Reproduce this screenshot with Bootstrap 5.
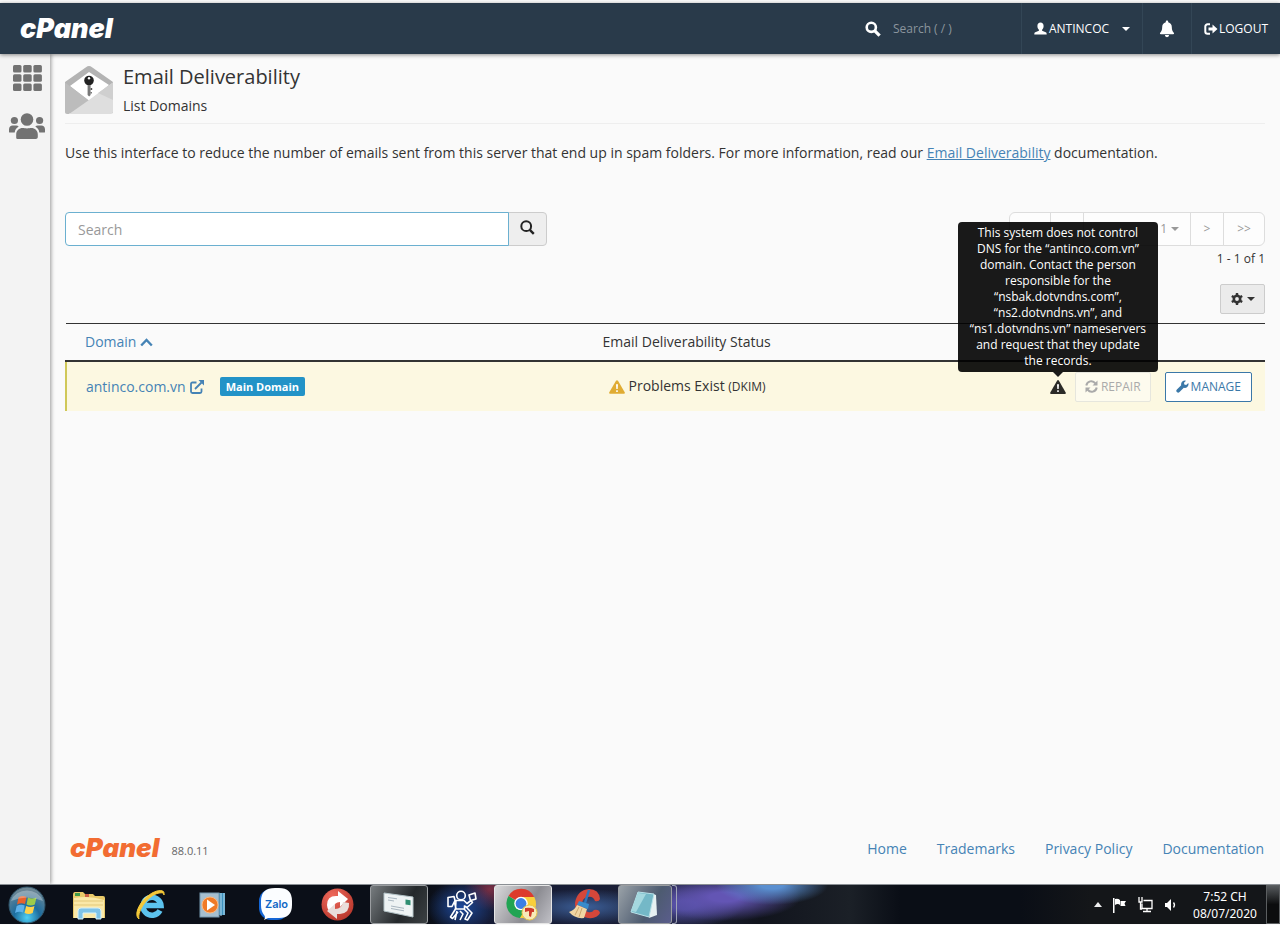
<!DOCTYPE html>
<html lang="en">
<head>
<meta charset="utf-8">
<meta name="viewport" content="width=device-width, initial-scale=1">
<title>cPanel - Email Deliverability</title>
<link href="https://cdn.jsdelivr.net/npm/bootstrap@5.3.0/dist/css/bootstrap.min.css" rel="stylesheet">
<style>
  body { font-family: "Open Sans", "Noto Sans", sans-serif; font-size: 14px; line-height: 20px; color: #333; background: #fafafa; }
  a { color: #4583b5; }
  svg { display: block; flex: none; }
  .topbar { height: 51px; margin-top: 3px; background: #293a4a; box-shadow: 0 1px 4px rgba(0,0,0,.45); z-index: 3; font-size: 12px; }
  .brand { font-family: Inter, "Open Sans", sans-serif; font-weight: 900; font-style: italic; font-size: 27px; line-height: 28px; text-decoration: none; }
  .topbar .brand { color: #fff; padding-left: 20px; }
  .page-foot .brand { color: #f26c32; font-size: 26px; }
  .top-seg { border-left: 1px solid #334656; }
  .top-seg, .top-seg:hover { color: #fff; }
  .top-search input { width: 128px; background: transparent; color: #fff; font-size: 12px; border: 0; outline: 0; padding: 0; }
  .top-search input::placeholder { color: #8b959d; opacity: 1; }
  .seg-user { width: 121px; font-size: 12px; border-radius: 0; padding: 0 12px; border-width: 0 0 0 1px; gap: 2px; }
  .seg-bell { width: 49px; border-width: 0 0 0 1px; border-radius: 0; padding: 0; }
  .seg-out { width: 89px; gap: 1px; }
  .caret-down { width: 0; height: 0; border: 4px solid transparent; border-top-color: currentColor; border-bottom: 0; }
  .side { width: 50px; background: #f3f3f3; box-shadow: 1px 0 4px rgba(0,0,0,.4); padding-top: 11px; gap: 22px; z-index: 2; }
  .content { padding: 10px 15px 0; }
  .page-head { border-bottom: 1px solid #eee; padding: 2px 0 7px; gap: 10px; }
  .page-head h1 { font-size: 20px; line-height: 22px; font-weight: 400; margin: 0 0 8px; }
  .intro { margin: 19px 0 49px; }
  .find { width: 482px; height: 34px; }
  .find .form-control { border: 1px solid #6bb0d0; border-radius: 4px 0 0 4px; font-size: 14px; padding: 6px 12px; box-shadow: none; color: #555; }
  .find .form-control::placeholder { color: #999; }
  .find .btn { width: 39px; background: #eee; border: 1px solid #ccc; padding: 0 0 3px; border-radius: 0 4px 4px 0; z-index: 0; }
  .find .form-control { z-index: 1; }
  .pager .page-link { height: 34px; min-width: 34px; font-size: 12px; line-height: 18px; padding: 7px 11px; text-align: center; color: #999; background: #fdfdfd; border-color: #ddd; }
  .pager .edge { width: 42px; }
  .pager .wide { width: 108px; justify-content: flex-end; }
  .count { font-size: 12px; line-height: 16px; margin: 5px 0 17px; }
  .gear { width: 45px; height: 30px; background: #ebebeb; border: 1px solid #ccc; border-radius: 2px; padding: 0; color: #333; }
  .domains { margin: 9px 0 0; --bs-table-bg: transparent; border-color: #333; color: #333; }
  .domains th { font-weight: 400; padding: 8px 8px 8px 10px; border-top: 1px solid #333; border-bottom: 2px solid #333; line-height: 20px; }
  .domains th a { vertical-align: top; }
  .domains th:first-child { width: 44%; padding-left: 19px; }
  .domains th:nth-child(2) { width: 32%; padding-left: 9px; }
  .domains td { background: #fcf8e1; padding: 9px 13px 9px 15px; border: 0; height: 50px; vertical-align: middle; }
  .domains td:first-child { border-left: 2px solid #d0c858; padding-left: 19px; }
  .domains td a, .domains th a { text-decoration: none; }
  .sub { font-size: 12px; }
  .tag { background: #2293c7; font-size: 11px; line-height: 13px; font-weight: 700; padding: 3px 6px; border-radius: 2px; margin-left: 16px; }
  .act { height: 30px; font-size: 12px; line-height: 18px; padding: 0 10px; border-radius: 2px; gap: 2px; }
  .act-repair, .act-repair:disabled { color: #aaa; border-color: #e6e6dd; background: #fdfbee; opacity: 1; padding: 0 9px; gap: 3px; }
  .act-manage { color: #3b78a8; border-color: #3b78a8; background: #fff; margin-left: 14px; }
  .alert-mark { margin-right: 9px; }
  .tip { position: absolute; bottom: 100%; left: 50%; width: 200px; margin: 0 0 7px -100px; z-index: 5; }
  .tip .tooltip-inner { max-width: none; background: rgba(0,0,0,.9); border-radius: 4px; font-size: 12px; line-height: 16px; padding: 3px 8px; color: #fff; }
  .tip .tip-arrow { width: 0; height: 0; border: 5px solid transparent; border-top-color: #1a1a1a; border-bottom: 0; position: absolute; top: 100%; left: 50%; margin-left: -5px; }
  .page-foot { padding: 0 1px 20px 5px; }
  .page-foot small { font-size: 11px; color: #666; }
  .page-foot .brand { padding-bottom: 2px; }
  .foot-links { gap: 30px; }
  .foot-links a { text-decoration: none; }
  .taskbar { height: 40px; margin-bottom: 1px; border-top: 1px solid #8a8f94; gap: 4px; color: #fff; z-index: 4;
    background:
      radial-gradient(ellipse 34px 26px at 461px 22px, #1e4a9c, transparent),
      radial-gradient(ellipse 26px 22px at 490px 4px, #7a2f45, transparent),
      radial-gradient(ellipse 72px 18px at 585px 22px, #3c5f98, transparent),
      radial-gradient(ellipse 56px 20px at 772px 0, #5a8fd0 20%, transparent),
      radial-gradient(ellipse 76px 24px at 725px 12px, #6355b4 20%, transparent),
      radial-gradient(ellipse 60px 22px at 685px 20px, #4f4c9c 20%, transparent),
      linear-gradient(90deg, #0b0f18 0, #0b0f18 430px, #151b35 480px, #1c2036 680px, #11141d 760px, #1b2027 850px, #0a0e16 900px, #0a0e16 1020px, #141619 1090px); }
  .task { width: 58px; height: 39px; padding: 0; border: 0; background: transparent; display: flex; align-items: center; justify-content: center; }
  .task-open { border: 1px solid #9a9da0; border-radius: 3px; background: linear-gradient(120deg, #777c7f, #24282b 60%, #3b4043); }
  .task-now { border: 1px solid #e5e5e5; background: linear-gradient(120deg, #d9d9db, #8c8c92 60%, #c0c0c6); }
  .task-pad { width: 54px; background: linear-gradient(120deg, #9aa2a8, #4d5b70 60%, #5a5d8c); }
  .task-stack { width: 5px; height: 39px; margin-left: -4px; border: 1px solid #a0a4b8; border-left: 0; border-radius: 0 3px 3px 0; }
  .task-start { width: 56px; padding-right: 2px; }
  .tray { gap: 10px; }
  .clock { font-size: 12px; line-height: 17px; width: 66px; text-align: center; margin: 0 4px 0 5px; font-family: "Noto Sans", "Open Sans", sans-serif; }
  .clock div { white-space: nowrap; }
  .peek { width: 14px; height: 39px; border: 1px solid #5b5e60; background: linear-gradient(#55595c, #0c0d0e 50%); padding: 0; }
</style>
</head>
<body class="d-flex flex-column min-vh-100">

<header class="topbar d-flex align-items-stretch position-relative">
  <a class="brand d-flex align-items-center" href="#">cPanel</a>
  <form class="top-search d-flex align-items-center ms-auto">
    <label for="quick" class="me-2 pe-1" aria-label="Search">
      <svg width="16" height="16" viewBox="0 0 16 16" fill="none" stroke="#fff" stroke-width="2.6"><circle cx="6.3" cy="6.3" r="4.6"/><path d="M9.8 9.8 14.6 14.6" stroke-width="3.2"/></svg>
    </label>
    <input id="quick" type="text" placeholder="Search ( / )">
  </form>
  <button class="btn top-seg seg-user d-flex align-items-center" type="button">
    <svg width="13" height="13" viewBox="0 0 13 13" fill="#fff"><path d="M6.500.5C8.400.5 9.600 1.800 9.600 4c0 1.600-.7 3-1.500 3.800v1l3.600 1.500c.8.4 1 1 1 2.200H.3c0-1.200.2-1.800 1-2.200l3.600-1.500v-1C4.100 7 3.400 5.600 3.400 4 3.400 1.800 4.600.5 6.500.5z"/></svg>
    <span class="text-nowrap">ANTINCOC</span><span class="caret-down ms-auto"></span>
  </button>
  <button class="btn top-seg seg-bell d-flex align-items-center justify-content-center" type="button" aria-label="Notifications">
    <svg width="16" height="18" viewBox="0 0 16 18" fill="#fff"><path d="M8 .5c.7 0 1.200.5 1.200 1.200v.5c2.300.6 3.600 2.400 3.600 4.800 0 3 .8 4.600 2 5.700.5.5.3 1.500-.6 1.500H1.800c-.9 0-1.100-1-.6-1.500 1.200-1.100 2-2.700 2-5.700 0-2.400 1.300-4.200 3.600-4.800v-.5C6.800 1 7.300.5 8 .5zM5.900 15.100h4.200a2.100 2.100 0 0 1-4.200 0z"/></svg>
  </button>
  <a class="top-seg seg-out d-flex align-items-center justify-content-center text-decoration-none" href="#">
    <svg width="14" height="12" viewBox="0 0 14 12"><path d="M6 1.300H3.500A2.200 2.200 0 0 0 1.300 3.500v5a2.200 2.200 0 0 0 2.200 2.200H6" fill="none" stroke="#fff" stroke-width="2"/><path d="M4.500 4.400h4V1.500L13.500 6l-5 4.500V7.600h-4z" fill="#fff"/></svg>
    <span>LOGOUT</span>
  </a>
</header>

<div class="d-flex flex-grow-1">
  <nav class="side d-flex flex-column align-items-center flex-shrink-0 position-relative" aria-label="Main">
    <a href="#" aria-label="Home" class="ms-1">
      <svg width="29" height="26" viewBox="0 0 29 26" fill="#727272"><g id="r"><rect x="0" y="0" width="8.500" height="7.500" rx="1.500"/><rect x="10.200" y="0" width="8.500" height="7.500" rx="1.500"/><rect x="20.400" y="0" width="8.500" height="7.500" rx="1.500"/></g><use href="#r" y="9.200"/><use href="#r" y="18.400"/></svg>
    </a>
    <a href="#" aria-label="User manager" class="ms-1">
      <svg width="36" height="26" viewBox="0 0 36 26" fill="#727272"><circle cx="18" cy="6.500" r="6.300"/><circle cx="5.400" cy="7.500" r="3.600"/><circle cx="30.600" cy="7.500" r="3.600"/><path d="M7.200 25v-3.500c0-4 3-6.500 6.500-6.500 1.500 0 2.300.4 4.300.4s2.800-.4 4.300-.4c3.500 0 6.500 2.500 6.500 6.500v2.500c0 1.200-.9 2-2 2H9.200c-1.100 0-2-.4-2-1z"/><path d="M0 19v-2.500c0-2.500 1.600-4 3.600-4h3.600c1 0 1.900.4 2.500 1.100C7.400 15 6 16.800 5.700 19.600H1.200C.5 19.600 0 19.300 0 19zM36 19v-2.500c0-2.500-1.600-4-3.600-4h-3.600c-1 0-1.900.4-2.500 1.100 2.300 1.400 3.700 3.200 4 6h4.500c.7 0 1.200-.3 1.200-.6z"/></svg>
    </a>
  </nav>

  <main class="content flex-grow-1 d-flex flex-column">
    <div class="page-head d-flex">
      <svg width="48" height="48" viewBox="0 0 48 48"><path d="M0 16 21 1.200q3-2.200 6 0L48 16v31H2q-2 0-2-2z" fill="#b3b3b3"/><path d="M5 20 24 6l20 13-20 16z" fill="#fff"/><path d="M0 16.500 24 34.500 4 48H2q-2 0-2-2z" fill="#bcbcbc"/><path d="M48 16.500V46q0 2-2 2H4l20-14z" fill="#dedede"/><path d="M48 16.500V34L33 27z" fill="#cfcfcf"/><circle cx="24" cy="14.500" r="4.800" fill="#222"/><circle cx="24" cy="12.300" r="1.200" fill="#fff"/><path d="M22.600 19h3v10l-1.500 1.500-1.500-1.500z" fill="#777"/><path d="M25.600 22h1.600v2h-1.600zM25.600 26h1.200v1.500h-1.200z" fill="#555"/></svg>
      <div>
        <h1>Email Deliverability</h1>
        <div>List Domains</div>
      </div>
    </div>

    <p class="intro">Use this interface to reduce the number of emails sent from this server that end up in spam folders. For more information, read our <a href="#">Email Deliverability</a> documentation.</p>

    <div class="d-flex justify-content-between align-items-start">
      <div class="input-group find flex-nowrap">
        <input type="text" class="form-control" placeholder="Search" aria-label="Search">
        <button class="btn d-flex align-items-center justify-content-center" type="button" aria-label="Go">
          <svg width="15" height="15" viewBox="0 0 15 15" fill="none" stroke="#222" stroke-width="2"><circle cx="6.200" cy="6.200" r="4.900"/><path d="M9.800 9.800 13.800 13.800" stroke-width="2.400"/></svg>
        </button>
      </div>
      <div class="d-flex flex-column align-items-end">
        <ul class="pagination pager m-0">
          <li class="page-item"><a class="page-link edge" href="#" aria-label="First page"></a></li>
          <li class="page-item"><a class="page-link" href="#" aria-label="Previous page"></a></li>
          <li class="page-item"><a class="page-link wide d-flex align-items-center text-nowrap" href="#">1<span class="caret-down ms-1"></span></a></li>
          <li class="page-item"><a class="page-link" href="#">&gt;</a></li>
          <li class="page-item"><a class="page-link edge" href="#">&gt;&gt;</a></li>
        </ul>
        <div class="count">1 - 1 of 1</div>
        <button class="btn gear d-flex align-items-center justify-content-center" type="button" aria-label="Settings">
          <svg width="12" height="12" viewBox="0 0 12 12"><circle cx="6" cy="6" r="3.200" fill="none" stroke="#333" stroke-width="2.600"/><path d="M6 0v2.500M6 9.500V12M.8 3l2.200 1.300M9 7.700 11.200 9M.8 9 3 7.700M9 4.300 11.200 3" stroke="#333" stroke-width="2.400"/></svg>
          <span class="caret-down ms-1"></span>
        </button>
      </div>
    </div>

    <table class="table domains">
      <thead>
        <tr>
          <th scope="col"><a href="#" class="d-inline-flex align-items-center gap-1">Domain <svg width="13" height="9" viewBox="0 0 13 9" fill="none" stroke="#4583b5" stroke-width="2.400"><path d="M1.200 7.500 6.500 2l5.300 5.500"/></svg></a></th>
          <th scope="col">Email Deliverability Status</th>
          <th scope="col" aria-label="Actions"></th>
        </tr>
      </thead>
      <tbody>
        <tr>
          <td>
            <div class="d-flex align-items-center">
              <a href="#" class="d-flex align-items-center gap-1">antinco.com.vn
                <svg width="14" height="14" viewBox="0 0 14 14" fill="none" stroke="#4583b5" stroke-width="1.800"><path d="M6.500 2.500h-4q-1.500 0-1.500 1.500v7.500q0 1.500 1.500 1.500H10q1.500 0 1.500-1.500v-3M5 9l6.500-6.500"/><path d="M8.500 0H14v5.500z" fill="#4583b5" stroke="none"/></svg>
              </a>
              <span class="badge tag">Main Domain</span>
            </div>
          </td>
          <td>
            <div class="d-flex align-items-center">
              <svg width="16" height="14" viewBox="0 0 16 14"><path d="M7 .8q1-1.300 2 0l6.700 11.400q.7 1.500-.9 1.600H1.200q-1.600-.1-.9-1.600z" fill="#e0ac33"/><path d="M7 4.300h2L8.700 9H7.300zM7.200 10.200h1.600v1.700H7.200z" fill="#fff"/></svg>
              <span class="ms-1">Problems Exist <span class="sub">(DKIM)</span></span>
            </div>
          </td>
          <td>
            <div class="d-flex align-items-center justify-content-end">
              <div class="position-relative alert-mark">
                <svg width="16" height="16" viewBox="0 0 16 16"><path d="M7.200 1.500q.8-1.200 1.600 0l6.900 12q.5 1.300-.8 1.400H1.100q-1.300-.1-.8-1.400z" fill="#2b2b28"/><path d="M7 5.200h2L8.700 10H7.300zM7.200 11.200h1.600V13H7.200z" fill="#fff"/></svg>
                <div class="tip" role="tooltip">
                  <div class="tooltip-inner">This system does not control DNS for the “antinco.com.vn” domain. Contact the person responsible for the “nsbak.dotvndns.com”, “ns2.dotvndns.vn”, and “ns1.dotvndns.vn” nameservers and request that they update the records.</div>
                  <div class="tip-arrow"></div>
                </div>
              </div>
              <button class="btn act act-repair d-flex align-items-center" type="button" disabled>
                <svg width="13" height="13" viewBox="0 0 13 13" fill="none" stroke="#aaa" stroke-width="2"><path d="M1.300 5.500A5 5 0 0 1 10.300 3.300M11.700 7.500A5 5 0 0 1 2.700 9.700"/><path d="M12.500.5v5h-5zM.5 12.500v-5h5z" fill="#aaa" stroke="none"/></svg>
                <span>REPAIR</span>
              </button>
              <button class="btn act act-manage d-flex align-items-center" type="button">
                <svg width="13" height="13" viewBox="0 0 13 13"><path d="M12.300 2.900 10.200 4.900 8.300 4.600 8 2.800 10 .7A3.800 3.800 0 0 0 5.200 5.200L.9 9.500a1.800 1.800 0 0 0 2.600 2.600l4.300-4.300a3.800 3.800 0 0 0 4.500-4.900z" fill="#3b78a8"/></svg>
                <span>MANAGE</span>
              </button>
            </div>
          </td>
        </tr>
      </tbody>
    </table>

    <footer class="page-foot d-flex justify-content-between align-items-center mt-auto">
      <div class="d-flex align-items-center"><a class="brand" href="#">cPanel</a><small class="ms-2 ps-1 pt-1">88.0.11</small></div>
      <div class="foot-links d-flex"><a href="#">Home</a><a href="#">Trademarks</a><a href="#">Privacy Policy</a><a href="#">Documentation</a></div>
    </footer>
  </main>
</div>

<div class="taskbar d-flex align-items-center position-relative">
  <button class="task task-start" type="button" aria-label="Start">
    <svg width="38" height="38" viewBox="0 0 38 38"><defs><radialGradient id="orb" cx=".5" cy=".85" r=".8"><stop offset="0" stop-color="#4fd0f4"/><stop offset=".45" stop-color="#1c6c9e"/><stop offset="1" stop-color="#6f8794"/></radialGradient></defs><circle cx="19" cy="19" r="18" fill="url(#orb)" stroke="#31566b"/><path d="M10.500 11.500q4-2.500 8-.5l-1.500 7q-4-1.500-8 .5z" fill="#e8622c"/><path d="M20 11.500q4 2 8.500 0L26.800 18.500q-4 2-8.300 0z" fill="#9ccb4a"/><path d="M8.700 20q4-2 8-.5l-1.700 7q-4-1.500-8 .5z" fill="#5eb1ea"/><path d="M18.200 20q4 2 8.300 0l-1.800 7q-4 2-8.200 0z" fill="#ffd24a"/><path d="M3 15a17 16 0 0 1 32 0q-16-7-32 0z" fill="#fff" opacity=".3"/></svg>
  </button>
  <button class="task" type="button" aria-label="Explorer">
    <svg width="34" height="30" viewBox="0 0 34 30"><path d="M1 5q0-3 2-3h8l2 2h8l2 2h8q2 0 2 2v20H1z" fill="#e8c969"/><path d="M3 3h5v3H3z" fill="#3f9a49"/><path d="M13 4h4v3h-4z" fill="#cb6046"/><path d="M2 8q15-3 30 2v18H2z" fill="#fae8a8"/><path d="M2 11h29M2 15h29" stroke="#e3c878"/><path d="M6 29V21q0-3 3-3h17q3 0 3 3v8h-5v-6H11v6z" fill="#7fc3e8" stroke="#d6f1fb"/></svg>
  </button>
  <button class="task" type="button" aria-label="Internet Explorer">
    <svg width="32" height="32" viewBox="0 0 32 32" fill="none"><path d="M25 21.500a9 9 0 1 1 1-5H9" stroke="#5cc3ee" stroke-width="5.500"/><path d="M9 11.500q2-4 7-4.500" stroke="#c9f2fe" stroke-width="2"/><path d="M4 30C-3 25 8 6 22 2q8-2 7 4 0-3-5-2C13 6 2 22 4 30z" fill="#f5c938" stroke="#f5c938"/></svg>
  </button>
  <button class="task" type="button" aria-label="Media Player">
    <svg width="28" height="28" viewBox="0 0 28 28"><path d="M6 2h20v22H6z" fill="#3e91bd"/><path d="M22 2v23M25 2v22" stroke="#b6dcf0"/><rect x="1" y="2" width="19" height="24" fill="#a6bfd0" stroke="#7699b0"/><circle cx="11" cy="14" r="8" fill="#f07a27" stroke="#fbb982"/><path d="M8 8.500v11l8-5.500z" fill="#fff"/></svg>
  </button>
  <button class="task" type="button" aria-label="Zalo">
    <svg width="33" height="33" viewBox="0 0 33 33"><rect x="0" y="1" width="30" height="31" rx="12" fill="#1466d6"/><path d="M16 0h4q13 0 13 13v4q0 13-13 13H9l-4 2q2-3 0-5-3-4-3-10v-4Q2 0 16 0z" fill="#fbfdff"/><text x="17.500" y="19.500" text-anchor="middle" font-family="Inter, sans-serif" font-size="11" font-weight="600" fill="#1268c6">Zalo</text></svg>
  </button>
  <button class="task" type="button" aria-label="Updater">
    <svg width="33" height="33" viewBox="0 0 33 33"><defs><radialGradient id="ball" cx=".35" cy=".25" r=".8"><stop offset="0" stop-color="#ef6a5c"/><stop offset="1" stop-color="#b8372c"/></radialGradient></defs><circle cx="16.500" cy="16.500" r="16" fill="url(#ball)"/><path d="M6 17Q6 8 15 8h2V3l10 8-8 8v-5q-6 0-6 6l-5 3q-2-3-2-6z" fill="#fff"/><path d="M28 15q1 10-9 11h-3v5l-10-8 8-7v5q7 0 8-7z" fill="#e9dedb"/></svg>
  </button>
  <button class="task task-open" type="button" aria-label="Mail window">
    <svg width="32" height="28" viewBox="0 0 32 28"><path d="M1 2 30 6v20L1 20z" fill="#eef3f4" stroke="#b4c4c8"/><path d="M22.500 8.500l5 .7v5l-5-.8z" fill="#2f8f72"/><path d="M5 6.500l9 1.300M5 9l6 1M8 15l13 2.300M8 17.500l13 2.300" stroke="#a9b6c0"/></svg>
  </button>
  <button class="task" type="button" aria-label="Messenger">
    <svg width="32" height="32" viewBox="0 0 32 32" fill="none" stroke="#fff" stroke-width="1.600" stroke-linejoin="round"><circle cx="16" cy="6.500" r="4.300"/><path d="M3 8.500l6-1 1 4-3 6H3zM11 11.500h8l3 3 4-3 1.500 2-5.500 5-2.500-1.500V20h-9zM9.500 13.500l1.500 6M24 6l6-2 1 6-5.500 1.500z"/><path d="M10.500 20l-5 8 2 1.500L13 23M12 22l-2 9M19 20l4 4-3 6 2.500 1L27 24l-5-5M15 22l3 3-3 6"/></svg>
  </button>
  <button class="task task-open task-now" type="button" aria-label="Chrome">
    <svg width="34" height="34" viewBox="0 0 34 34"><path d="M15 15 2.500 8A14.500 14.500 0 0 1 28 8.500z" fill="#dd3b2c"/><path d="M15 16 2.500 8A14.500 14.500 0 0 0 14 30l7-11z" fill="#21a453"/><path d="M16 9h12.300A14.500 14.500 0 0 1 14 30l7-12z" fill="#f9cf3b"/><circle cx="15" cy="15.500" r="6.800" fill="#fff"/><circle cx="15" cy="15.500" r="5.400" fill="#3c7fe6"/><circle cx="23.500" cy="24.500" r="7.500" fill="#f7eab8" stroke="#e8c64a"/><path d="M19 20q5-1 9 1v3h-2l-1 5-2-1v-5l-4 1z" fill="#d03a2a"/></svg>
  </button>
  <button class="task" type="button" aria-label="Cleaner">
    <svg width="34" height="33" viewBox="0 0 34 33"><path d="M32 11q-1 3-5 2-2-5-7-4-6 1-6 7t6 8q4 1 6-2 5-1 6 3-3 6-12 5Q7 28 7 15 9 2 21 1q10 0 11 10z" fill="#d4473a"/><path d="M21 2 17 15" stroke="#2f75ba" stroke-width="2.500"/><path d="M11 13l10 3-1 5-11-4z" fill="#398bcb"/><path d="M9 17l10 4-3 9q-9 1-15-6 6-2 8-7z" fill="#f0d6a4"/><path d="M11 19l-4 8M14 20l-3 9" stroke="#cda66c"/></svg>
  </button>
  <button class="task task-open task-pad" type="button" aria-label="Notepad">
    <svg width="32" height="30" viewBox="0 0 32 30"><path d="M24 4l3 1 1 20-8 3z" fill="#e8f1f2"/><path d="M9 2 25 4l-5 23-18-5z" fill="#74b8c7" stroke="#b9e2e9"/><path d="M9 3l8 1L7 22l-5-1z" fill="#a5d8df"/></svg>
  </button>
  <div class="task-stack"></div>

  <div class="tray d-flex align-items-center ms-auto">
    <svg width="8" height="5" viewBox="0 0 8 5"><path d="M4 0l4 5H0z" fill="#eee"/></svg>
    <svg width="16" height="16" viewBox="0 0 16 16" fill="#fff"><path d="M1 1h1.500v15H1z"/><path d="M3 2q3-1 5 1v5Q6 6 3 8zM8.500 4H14l-1.500 2.500 1 2.500h-5z"/></svg>
    <svg width="16" height="16" viewBox="0 0 16 16" fill="none" stroke="#fff" stroke-width="1.300"><path d="M5.500 3.500H14v8H4v-5M9 11.500V15M5 14.500h8M1 1.500V5h3V1.500M2.500 5v7H4M1 0v2M4 0v2"/></svg>
    <svg width="13" height="14" viewBox="0 0 13 14"><path d="M1 5h2l4-4v12L3 9H1z" fill="#fff"/><path d="M9.500 4.500q2 2.500 0 5" fill="none" stroke="#fff" stroke-width="1.300"/></svg>
    <div class="clock"><div>7:52 CH</div><div>08/07/2020</div></div>
  </div>
  <button class="peek" type="button" aria-label="Show desktop"></button>
</div>

<script src="https://cdn.jsdelivr.net/npm/bootstrap@5.3.0/dist/js/bootstrap.bundle.min.js"></script>
</body>
</html>
